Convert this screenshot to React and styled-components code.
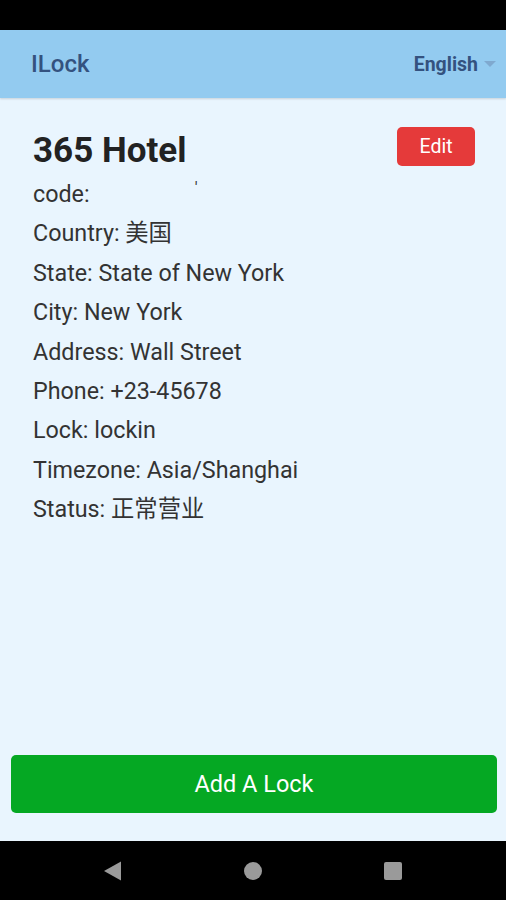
import React from 'react';
import styled, { createGlobalStyle } from 'styled-components';

const GlobalStyle = createGlobalStyle`
  html, body {
    margin: 0;
    padding: 0;
    background: #000;
  }
  body {
    font-family: Roboto, "Noto Sans CJK SC", sans-serif;
  }
`;

const Screen = styled.div`
  width: 506px;
  height: 900px;
  display: flex;
  flex-direction: column;
  background: #000;
  overflow: hidden;
`;

const StatusBar = styled.div`
  height: 30px;
  background: #000;
`;

const Header = styled.header`
  height: 68px;
  display: flex;
  align-items: center;
  justify-content: space-between;
  padding: 0 10px 0 31px;
  background: #93cbf0;
  box-shadow: 0 1px 2px rgba(0, 0, 0, 0.15);
  z-index: 1;
`;

const Brand = styled.div`
  font-size: 24px;
  font-weight: 500;
  color: #34527f;
`;

const LangPicker = styled.div`
  display: flex;
  align-items: center;
  gap: 6px;
  font-size: 19.5px;
  font-weight: 700;
  color: #34527f;
`;

const Caret = styled.span`
  width: 0;
  height: 0;
  border-left: 6px solid transparent;
  border-right: 6px solid transparent;
  border-top: 6px solid #7fa9cf;
`;

const Body = styled.main`
  flex: 1;
  display: flex;
  flex-direction: column;
  justify-content: space-between;
  background: #e9f5fe;
  padding: 29px 9px 28px 11px;
`;

const Card = styled.section`
  padding: 0 22px;
  color: #333;
`;

const TitleRow = styled.div`
  display: flex;
  align-items: flex-start;
  justify-content: space-between;
  margin-bottom: 4px;
`;

const Title = styled.h1`
  margin: 4px 0 0;
  font-size: 35px;
  font-weight: 700;
  color: #222;
  line-height: 40px;
`;

const EditButton = styled.button`
  width: 78px;
  height: 39px;
  border: none;
  border-radius: 5px;
  background: #e53a3a;
  color: #fff;
  font-family: inherit;
  font-size: 19.5px;
`;

const Row = styled.div`
  font-size: 23.3px;
  line-height: 39.4px;
  color: #333;
`;

const Hidden = styled.span`
  margin-left: 105px;
  font-size: 16px;
  color: #333;
  vertical-align: top;
  line-height: 26px;
`;

const AddButton = styled.button`
  width: 100%;
  height: 58px;
  border: none;
  border-radius: 5px;
  background: #05a823;
  color: #fff;
  font-family: inherit;
  font-size: 23.5px;
`;

const NavBar = styled.nav`
  height: 59px;
  display: flex;
  align-items: center;
  justify-content: center;
  gap: 120px;
  background: #000;
`;

const NavIcon = styled.svg`
  width: 20px;
  height: 20px;
  fill: #9a9a9a;
`;

const rows = [
  ['Country', '美国'],
  ['State', 'State of New York'],
  ['City', 'New York'],
  ['Address', 'Wall Street'],
  ['Phone', '+23-45678'],
  ['Lock', 'lockin'],
  ['Timezone', 'Asia/Shanghai'],
  ['Status', '正常营业'],
];

const App = () => (
  <Screen>
    <GlobalStyle />
    <StatusBar />
    <Header>
      <Brand>ILock</Brand>
      <LangPicker>
        English
        <Caret />
      </LangPicker>
    </Header>
    <Body>
      <Card>
        <TitleRow>
          <Title>365 Hotel</Title>
          <EditButton>Edit</EditButton>
        </TitleRow>
        <Row>
          code:
          <Hidden>'</Hidden>
        </Row>
        {rows.map(([label, value]) => (
          <Row key={label}>{`${label}: ${value}`}</Row>
        ))}
      </Card>
      <AddButton>Add A Lock</AddButton>
    </Body>
    <NavBar>
      <NavIcon viewBox="0 0 20 20">
        <path d="M1 10 L18 0.5 L18 19.5 Z" />
      </NavIcon>
      <NavIcon viewBox="0 0 20 20">
        <circle cx="10" cy="10" r="9" />
      </NavIcon>
      <NavIcon viewBox="0 0 20 20">
        <rect x="1" y="1" width="18" height="18" rx="2" />
      </NavIcon>
    </NavBar>
  </Screen>
);

export default App;
